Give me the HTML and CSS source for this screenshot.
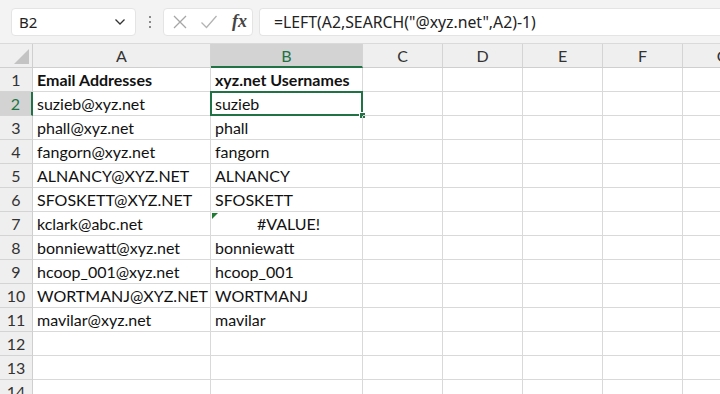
FILE: index.html
```html
<!DOCTYPE html>
<html lang="en">
<head>
    <meta charset="UTF-8">
    <title>Book1 - Excel</title>
    <link rel="stylesheet" href="styles.css">
</head>
<body>
    <div class="toolbar">
        <div class="name-box">
            <span>B2</span>
            <svg class="chevron" width="12" height="8" viewBox="0 0 12 8"><path d="M1.5 1.5 L6 6 L10.5 1.5" fill="none" stroke="#333" stroke-width="1.3"/></svg>
        </div>
        <div class="grip">
            <i></i><i></i><i></i>
        </div>
        <div class="fx-box">
            <svg width="16" height="16" viewBox="0 0 16 16"><path d="M2 2 L14 14 M14 2 L2 14" stroke="#a6a6a6" stroke-width="1.3"/></svg>
            <svg width="18" height="16" viewBox="0 0 18 16"><path d="M1.5 8.5 L6.5 13.5 L16.5 2" fill="none" stroke="#b3b3b3" stroke-width="1.3"/></svg>
            <span class="fx">fx</span>
        </div>
        <div class="formula">=LEFT(A2,SEARCH("@xyz.net",A2)-1)</div>
    </div>

    <div class="sheet">
        <div class="corner"><span class="tri"></span></div>
        <div class="col-head">A</div>
        <div class="col-head active">B</div>
        <div class="col-head">C</div>
        <div class="col-head">D</div>
        <div class="col-head">E</div>
        <div class="col-head">F</div>
        <div class="col-head">G</div>

        <div class="row-head">1</div>
        <div class="cell bold">Email Addresses</div>
        <div class="cell bold">xyz.net Usernames</div>
        <div class="cell"></div><div class="cell"></div><div class="cell"></div><div class="cell"></div><div class="cell"></div>

        <div class="row-head active">2</div>
        <div class="cell">suzieb@xyz.net</div>
        <div class="cell selected">suzieb<span class="sel-frame"></span><span class="handle"></span></div>
        <div class="cell"></div><div class="cell"></div><div class="cell"></div><div class="cell"></div><div class="cell"></div>

        <div class="row-head">3</div>
        <div class="cell">phall@xyz.net</div>
        <div class="cell">phall</div>
        <div class="cell"></div><div class="cell"></div><div class="cell"></div><div class="cell"></div><div class="cell"></div>

        <div class="row-head">4</div>
        <div class="cell">fangorn@xyz.net</div>
        <div class="cell">fangorn</div>
        <div class="cell"></div><div class="cell"></div><div class="cell"></div><div class="cell"></div><div class="cell"></div>

        <div class="row-head">5</div>
        <div class="cell">ALNANCY@XYZ.NET</div>
        <div class="cell">ALNANCY</div>
        <div class="cell"></div><div class="cell"></div><div class="cell"></div><div class="cell"></div><div class="cell"></div>

        <div class="row-head">6</div>
        <div class="cell">SFOSKETT@XYZ.NET</div>
        <div class="cell">SFOSKETT</div>
        <div class="cell"></div><div class="cell"></div><div class="cell"></div><div class="cell"></div><div class="cell"></div>

        <div class="row-head">7</div>
        <div class="cell">kclark@abc.net</div>
        <div class="cell error"><span class="flag"></span>#VALUE!</div>
        <div class="cell"></div><div class="cell"></div><div class="cell"></div><div class="cell"></div><div class="cell"></div>

        <div class="row-head">8</div>
        <div class="cell">bonniewatt@xyz.net</div>
        <div class="cell">bonniewatt</div>
        <div class="cell"></div><div class="cell"></div><div class="cell"></div><div class="cell"></div><div class="cell"></div>

        <div class="row-head">9</div>
        <div class="cell">hcoop_001@xyz.net</div>
        <div class="cell">hcoop_001</div>
        <div class="cell"></div><div class="cell"></div><div class="cell"></div><div class="cell"></div><div class="cell"></div>

        <div class="row-head">10</div>
        <div class="cell">WORTMANJ@XYZ.NET</div>
        <div class="cell">WORTMANJ</div>
        <div class="cell"></div><div class="cell"></div><div class="cell"></div><div class="cell"></div><div class="cell"></div>

        <div class="row-head">11</div>
        <div class="cell">mavilar@xyz.net</div>
        <div class="cell">mavilar</div>
        <div class="cell"></div><div class="cell"></div><div class="cell"></div><div class="cell"></div><div class="cell"></div>

        <div class="row-head">12</div>
        <div class="cell"></div><div class="cell"></div><div class="cell"></div><div class="cell"></div><div class="cell"></div><div class="cell"></div><div class="cell"></div>

        <div class="row-head">13</div>
        <div class="cell"></div><div class="cell"></div><div class="cell"></div><div class="cell"></div><div class="cell"></div><div class="cell"></div><div class="cell"></div>

        <div class="row-head">14</div>
        <div class="cell"></div><div class="cell"></div><div class="cell"></div><div class="cell"></div><div class="cell"></div><div class="cell"></div><div class="cell"></div>
    </div>
</body>
</html>
```

FILE: styles.css
```css
/* лист Excel */
body {
    margin: 0;
    width: 720px;
    height: 394px;
    overflow: hidden;
    background: #ffffff;
    font-family: Lato, "Open Sans", sans-serif;
}
.toolbar {
    display: flex;
    align-items: center;
    height: 43px;
    background: #f3f3f3;
    padding-left: 11px;
}
.name-box {
    display: flex;
    align-items: center;
    justify-content: space-between;
    width: 125px;
    height: 28px;
    box-sizing: border-box;
    padding: 0 9px 0 7px;
    background: #fff;
    border: 1px solid #e4e4e4;
    border-radius: 4px;
    font-family: "Noto Sans", sans-serif;
    font-size: 15px;
    color: #222;
}
.grip {
    display: flex;
    flex-direction: column;
    gap: 3px;
    width: 27px;
    align-items: center;
}
.grip i {
    display: block;
    width: 2px;
    height: 2px;
    background: #8a8a8a;
}
.fx-box {
    display: flex;
    align-items: center;
    gap: 12px;
    width: 90px;
    height: 28px;
    box-sizing: border-box;
    padding-left: 8px;
    background: #fff;
    border: 1px solid #e4e4e4;
    border-radius: 4px;
}
.fx {
    font-family: "Liberation Serif", serif;
    font-style: italic;
    font-weight: bold;
    font-size: 18px;
    color: #444;
    margin-left: 2px;
}
.formula {
    flex: 1;
    height: 28px;
    margin-left: 6px;
    box-sizing: border-box;
    padding-left: 14px;
    line-height: 27px;
    background: #fff;
    border: 1px solid #e4e4e4;
    border-right: none;
    border-radius: 4px 0 0 4px;
    font-family: "Noto Sans", sans-serif;
    font-size: 15.8px;
    color: #222;
    white-space: nowrap;
}
.sheet {
    display: grid;
    grid-template-columns: 33px 178px 152px 80px 80px 80px 80px 80px;
    grid-template-rows: 24px repeat(14, 24px);
    width: 720px;
    overflow: hidden;
    border-top: 1px solid #dadada;
}
.corner {
    position: relative;
    background: #efefef;
    border-right: 1px solid #cfcfcf;
    border-bottom: 1px solid #cfcfcf;
}
.tri {
    position: absolute;
    right: 3px;
    bottom: 3px;
    width: 0;
    height: 0;
    border-left: 15px solid transparent;
    border-bottom: 15px solid #c3c3c3;
}
.col-head {
    background: #efefef;
    border-right: 1px solid #d4d4d4;
    border-bottom: 1px solid #cfcfcf;
    text-align: center;
    line-height: 23px;
    font-size: 16px;
    color: #333;
}
.col-head.active {
    background: #d3d3d3;
    border-bottom: 2px solid #217346;
    color: #217346;
}
.row-head {
    background: #efefef;
    border-right: 1px solid #cfcfcf;
    border-bottom: 1px solid #d4d4d4;
    text-align: center;
    line-height: 23px;
    font-size: 16px;
    color: #333;
}
.row-head.active {
    background: #d3d3d3;
    border-right: 2px solid #217346;
    color: #217346;
}
.cell {
    position: relative;
    overflow: hidden;
    border-right: 1px solid #d9d9d9;
    border-bottom: 1px solid #d9d9d9;
    padding-left: 4px;
    line-height: 24px;
    font-size: 16px;
    color: #111;
    white-space: nowrap;
}
.cell.selected {
    overflow: visible;
}
.bold {
    font-weight: bold;
}
.sel-frame {
    position: absolute;
    left: -1px;
    top: -1px;
    right: -1px;
    bottom: -1px;
    border: 2px solid #217346;
}
.handle {
    position: absolute;
    right: -4px;
    bottom: -4px;
    width: 5px;
    height: 5px;
    background: #217346;
    border: 1px solid #fff;
}
.error {
    text-align: center;
}
.flag {
    position: absolute;
    left: 1px;
    top: 1px;
    width: 0;
    height: 0;
    border-top: 6px solid #1e7d32;
    border-right: 6px solid transparent;
}
```
